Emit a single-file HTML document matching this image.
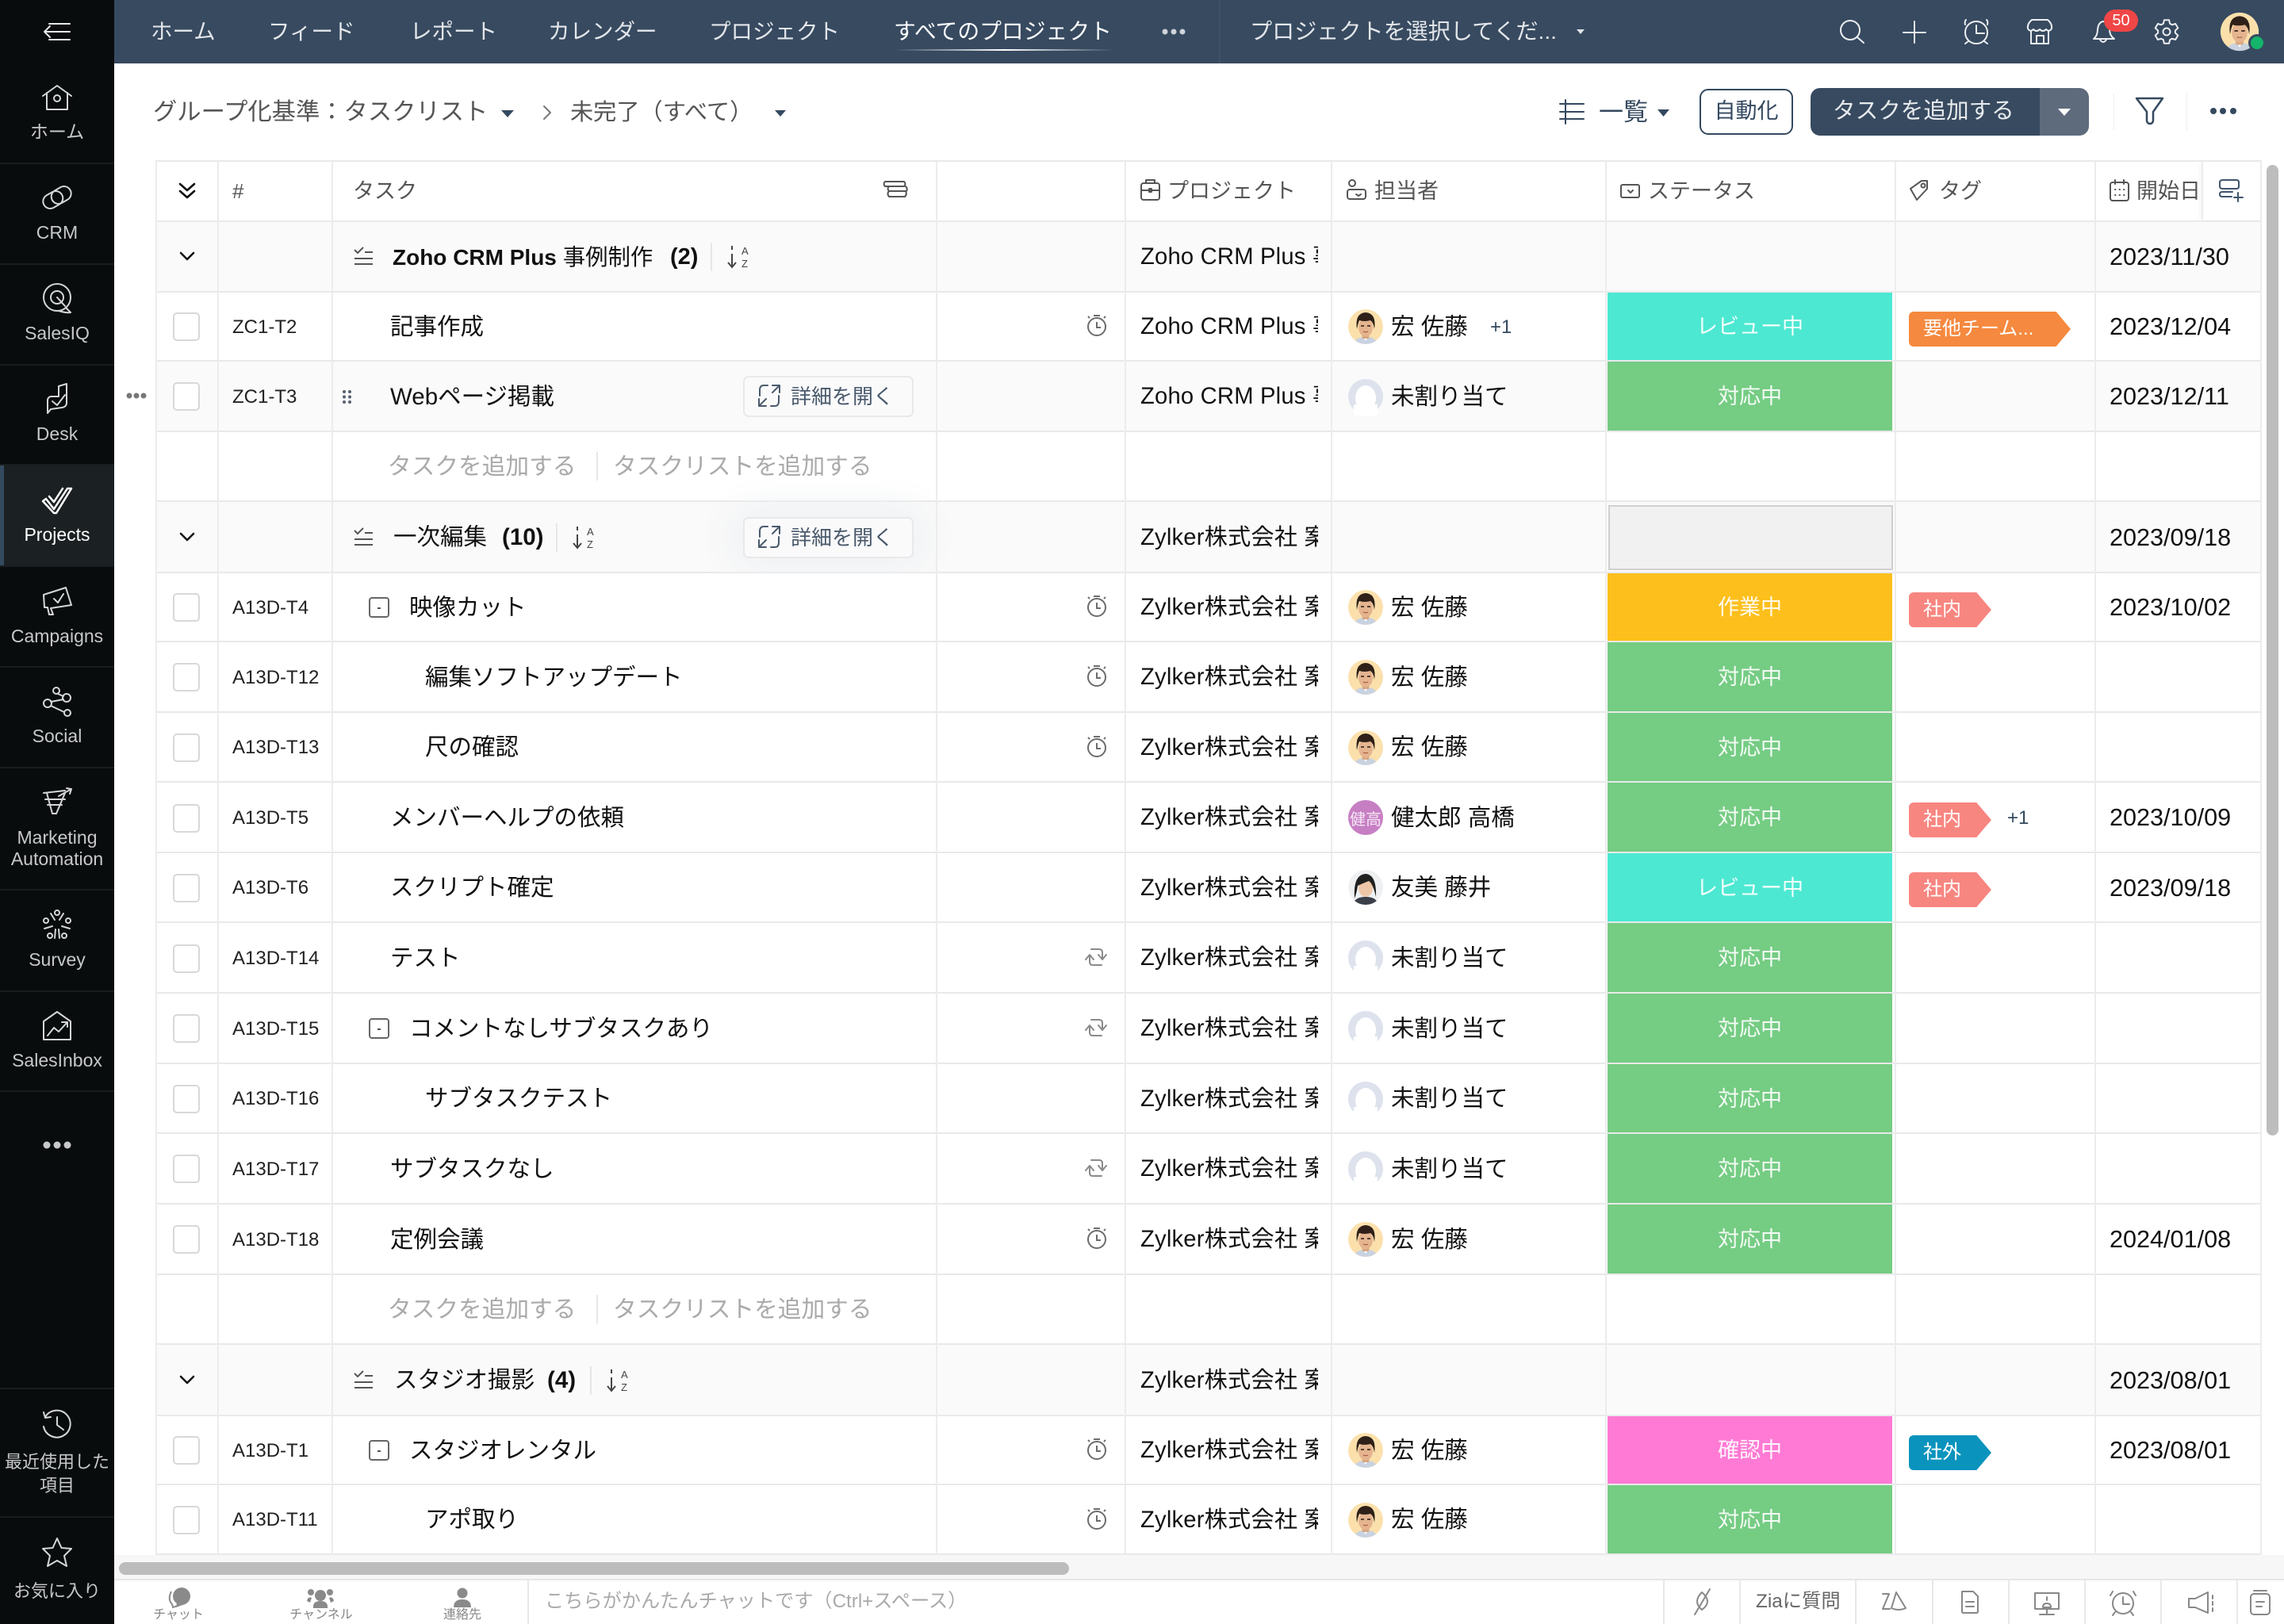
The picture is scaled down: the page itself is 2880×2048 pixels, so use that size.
<!DOCTYPE html>
<html lang="ja"><head><meta charset="utf-8"><title>Tasks</title>
<style>
html,body{margin:0;padding:0;background:#fff}
body{position:relative;width:2880px;height:2048px;overflow:hidden;font-family:"Liberation Sans","Noto Sans CJK JP",sans-serif;color:#111}
.abs,.n,.tb,.sl,.bb{position:absolute;white-space:nowrap}
#side{position:absolute;left:0;top:0;width:144px;height:2048px;background:#090c0d}
#top{position:absolute;left:144px;top:0;width:2736px;height:80px;background:#374a60}
.n{top:0;line-height:80px;font-size:27.5px;color:#e3e6ea}
.tb{line-height:60px;top:112px;color:#555}
.sl{left:0;width:144px;text-align:center;font-size:23px;color:#c6c8c9;line-height:28px}
.sd{position:absolute;left:0;width:144px;height:2px;background:#1a1d1f}
.r{position:absolute;left:196px;width:2655px;box-sizing:border-box;border-bottom:2px solid #e9e9ea;height:var(--h);line-height:var(--h);font-size:29.5px;background:#fff}
.r>span{position:absolute;top:0;white-space:nowrap}
.gr{background:#fafafa}
.h{font-size:27px;color:#555}
.i{left:97px;font-size:24px;color:#222}
.t1{left:296px}.t2{left:320px}.t3{left:340px}
.g1{left:300px}
.p{left:1242px;width:224px;overflow:hidden;font-size:29.2px;letter-spacing:.2px}
.a{left:1558px}
.s{left:1831px;width:359px;height:calc(var(--h) - 2px);text-align:center;font-size:27px;color:rgba(255,255,255,.92)}
.k{background:#75cc83}.c{background:#4de8d2}.y{background:#fdbf1c}.m{background:#ff7ad4}
.d{left:2464px;font-size:30.6px}
.ad{font-size:29.7px;color:#aaa}
.tag{top:24px!important;left:2211px;height:44px;line-height:44px;width:104px;padding-left:18px;box-sizing:border-box;font-size:24px;color:#fff;border-radius:6px;clip-path:polygon(0 0,82% 0,100% 50%,82% 100%,0 100%)}
.pk{background:#f88680}.bl{background:#0a93bd}
.or{background:#f5893f;width:204px;clip-path:polygon(0 0,91% 0,100% 50%,91% 100%,0 100%)}
.pl{font-size:24px;color:#34495f}
.btn{left:741px;width:215px;height:52px;line-height:48px;box-sizing:border-box;border:2px solid #e9e9ec;border-radius:7px;background:#fafafb;font-size:26px;color:#4a5a6c;padding-left:58px}
.sp{width:2px;height:36px;background:#e6e6e6}
.v{position:absolute;top:203px;width:2px;height:1757px;background:#ececed}
.bb{top:2027px;font-size:16px;color:#888;line-height:20px;text-align:center;width:120px}
.bs{position:absolute;top:1991px;width:2px;height:57px;background:#e8e8e8}
</style></head><body>

<div id="side"></div>
<div class="abs" style="left:0;top:586px;width:144px;height:127px;background:#1b2022"></div>
<div class="abs" style="left:0;top:586px;width:5px;height:127px;background:#34495f"></div>
<div class="sd" style="top:205px"></div><div class="sd" style="top:332px"></div><div class="sd" style="top:459px"></div><div class="sd" style="top:585px"></div><div class="sd" style="top:713px"></div><div class="sd" style="top:840px"></div><div class="sd" style="top:967px"></div><div class="sd" style="top:1121px"></div><div class="sd" style="top:1249px"></div><div class="sd" style="top:1375px"></div><div class="sd" style="top:1750px"></div><div class="sd" style="top:1912px"></div>
<div class="sl" style="top:152px">ホーム</div>
<div class="sl" style="top:279px">CRM</div>
<div class="sl" style="top:406px">SalesIQ</div>
<div class="sl" style="top:533px">Desk</div>
<div class="sl" style="top:660px;color:#fff">Projects</div>
<div class="sl" style="top:788px">Campaigns</div>
<div class="sl" style="top:914px">Social</div>
<div class="sl" style="top:1042px">Marketing</div>
<div class="sl" style="top:1069px">Automation</div>
<div class="sl" style="top:1196px">Survey</div>
<div class="sl" style="top:1323px">SalesInbox</div>
<div class="sl" style="top:1830px;font-size:22px">最近使用した</div>
<div class="sl" style="top:1860px;font-size:22px">項目</div>
<div class="sl" style="top:1993px;font-size:22px">お気に入り</div>

<div id="top"></div>
<span class="n" style="left:190px">ホーム</span>
<span class="n" style="left:338px">フィード</span>
<span class="n" style="left:517px">レポート</span>
<span class="n" style="left:691px">カレンダー</span>
<span class="n" style="left:894px">プロジェクト</span>
<span class="n" style="left:1127px;color:#fff;font-size:27.8px">すべてのプロジェクト</span>
<span class="n" style="left:1576px;font-size:28.1px">プロジェクトを選択してくだ...</span>
<div class="abs" style="left:1128px;top:62px;width:277px;height:2px;background:linear-gradient(90deg,rgba(255,255,255,0),#fff 50%,rgba(255,255,255,0))"></div>
<div class="abs" style="left:1537px;top:0;width:2px;height:80px;background:#3f5268"></div>
<div class="abs" style="left:2653px;top:12px;width:43px;height:28px;border-radius:14px;background:#ef4646;color:#fff;font-size:20px;line-height:28px;text-align:center;z-index:6">50</div>

<span class="tb" style="left:193px;font-size:30.3px">グループ化基準：タスクリスト</span>
<span class="tb" style="left:719px;font-size:29.2px">未完了（すべて）</span>
<span class="tb" style="left:2016px;font-size:31px;color:#34495f">一覧</span>
<div class="abs" style="left:2143px;top:112px;width:118px;height:58px;box-sizing:border-box;border:2px solid #34495f;border-radius:11px;line-height:52px;text-align:center;font-size:27px;color:#34495f">自動化</div>
<div class="abs" style="left:2283px;top:111px;width:289px;height:60px;background:#374a60;border-radius:12px 0 0 12px;line-height:58px;font-size:28.6px;color:#e8ebee;padding-left:28px;box-sizing:border-box">タスクを追加する</div>
<div class="abs" style="left:2572px;top:111px;width:62px;height:60px;background:#5d6b7d;border-radius:0 12px 12px 0"></div>
<div class="abs" style="left:2665px;top:118px;width:1px;height:46px;background:#eee"></div>
<div class="abs" style="left:2757px;top:118px;width:1px;height:46px;background:#eee"></div>

<!-- table -->
<div class="r h" style="top:203px;--h:77px;border-radius:10px 10px 0 0">
<span style="left:97px;font-size:26px">#</span><span style="left:249px">タスク</span>
<span style="left:1276px">プロジェクト</span><span style="left:1537px">担当者</span><span style="left:1882px">ステータス</span><span style="left:2249px">タグ</span><span style="left:2498px">開始日</span>
<span style="left:2580px;width:75px;height:74px;background:#fff;border-left:2px solid #ececed;box-shadow:-3px 0 4px rgba(0,0,0,.03)"></span>
</div>
<div class="abs" style="left:196px;top:202px;width:2656px;height:2px;background:#e9e9ea;z-index:3"></div>

<div class="r gr" style="top:280px;--h:89px"><span class="g1" style="left:299px;font-size:28.4px"><b style="font-size:28px">Zoho CRM Plus</b> 事例制作</span><span style="left:649px;font-size:29px"><b>(2)</b></span><span class="sp" style="left:700px;top:26px"></span><span class="p">Zoho CRM Plus 事例制作</span><span class="d">2023/11/30</span></div>

<div class="r" style="top:369px;--h:87px"><span class="i">ZC1-T2</span><span class="t1">記事作成</span><span class="p">Zoho CRM Plus 事例制作</span><span class="a">宏 佐藤</span><span class="pl" style="left:1683px">+1</span><span class="s c">レビュー中</span><span class="tag or">要他チーム...</span><span class="d">2023/12/04</span></div>

<div class="r gr" style="top:456px;--h:89px"><span class="i">ZC1-T3</span><span class="t1">Webページ掲載</span><span class="btn" style="top:18px">詳細を開く</span><span class="p">Zoho CRM Plus 事例制作</span><span class="a">未割り当て</span><span class="s k">対応中</span><span class="d">2023/12/11</span></div>

<div class="r" style="top:545px;--h:88px"><span class="ad" style="left:293px">タスクを追加する</span><span class="sp" style="left:556px;top:25px"></span><span class="ad" style="left:577px">タスクリストを追加する</span></div>

<div class="r gr" style="top:633px;--h:90px"><span class="g1">一次編集</span><span style="left:437px"><b>(10)</b></span><span class="sp" style="left:505px;top:27px"></span><span class="btn" style="top:19px;box-shadow:0 0 50px 12px #eef0f3">詳細を開く</span><span class="p">Zylker株式会社 案件制作</span><span style="left:1832px;top:4px;width:359px;height:82px;box-sizing:border-box;background:#f1f1f1;border:2px solid #d0d0d0"></span><span class="d">2023/09/18</span></div>

<div class="r" style="top:723px;--h:87px"><span class="i">A13D-T4</span><span class="t2">映像カット</span><span class="p">Zylker株式会社 案件制作</span><span class="a">宏 佐藤</span><span class="s y">作業中</span><span class="tag pk">社内</span><span class="d">2023/10/02</span></div>

<div class="r" style="top:810px;--h:89px"><span class="i">A13D-T12</span><span class="t3">編集ソフトアップデート</span><span class="p">Zylker株式会社 案件制作</span><span class="a">宏 佐藤</span><span class="s k">対応中</span></div>

<div class="r" style="top:899px;--h:88px"><span class="i">A13D-T13</span><span class="t3">尺の確認</span><span class="p">Zylker株式会社 案件制作</span><span class="a">宏 佐藤</span><span class="s k">対応中</span></div>

<div class="r" style="top:987px;--h:89px"><span class="i">A13D-T5</span><span class="t1">メンバーヘルプの依頼</span><span class="p">Zylker株式会社 案件制作</span><span class="a">健太郎 高橋</span><span class="s k">対応中</span><span class="tag pk" style="top:25px!important">社内</span><span class="pl" style="left:2335px">+1</span><span class="d">2023/10/09</span></div>

<div class="r" style="top:1076px;--h:88px"><span class="i">A13D-T6</span><span class="t1">スクリプト確定</span><span class="p">Zylker株式会社 案件制作</span><span class="a">友美 藤井</span><span class="s c">レビュー中</span><span class="tag pk">社内</span><span class="d">2023/09/18</span></div>

<div class="r" style="top:1164px;--h:89px"><span class="i">A13D-T14</span><span class="t1">テスト</span><span class="p">Zylker株式会社 案件制作</span><span class="a">未割り当て</span><span class="s k">対応中</span></div>

<div class="r" style="top:1253px;--h:89px"><span class="i">A13D-T15</span><span class="t2">コメントなしサブタスクあり</span><span class="p">Zylker株式会社 案件制作</span><span class="a">未割り当て</span><span class="s k">対応中</span></div>

<div class="r" style="top:1342px;--h:88px"><span class="i">A13D-T16</span><span class="t3">サブタスクテスト</span><span class="p">Zylker株式会社 案件制作</span><span class="a">未割り当て</span><span class="s k">対応中</span></div>

<div class="r" style="top:1430px;--h:89px"><span class="i">A13D-T17</span><span class="t1">サブタスクなし</span><span class="p">Zylker株式会社 案件制作</span><span class="a">未割り当て</span><span class="s k">対応中</span></div>

<div class="r" style="top:1519px;--h:89px"><span class="i">A13D-T18</span><span class="t1">定例会議</span><span class="p">Zylker株式会社 案件制作</span><span class="a">宏 佐藤</span><span class="s k">対応中</span><span class="d">2024/01/08</span></div>

<div class="r" style="top:1608px;--h:88px"><span class="ad" style="left:293px">タスクを追加する</span><span class="sp" style="left:556px;top:25px"></span><span class="ad" style="left:577px">タスクリストを追加する</span></div>

<div class="r gr" style="top:1696px;--h:90px"><span class="g1" style="left:301px">スタジオ撮影</span><span style="left:494px"><b>(4)</b></span><span class="sp" style="left:548px;top:27px"></span><span class="p">Zylker株式会社 案件制作</span><span class="d">2023/08/01</span></div>

<div class="r" style="top:1786px;--h:87px"><span class="i">A13D-T1</span><span class="t2">スタジオレンタル</span><span class="p">Zylker株式会社 案件制作</span><span class="a">宏 佐藤</span><span class="s m">確認中</span><span class="tag bl">社外</span><span class="d">2023/08/01</span></div>

<div class="r" style="top:1873px;--h:88px"><span class="i">A13D-T11</span><span class="t3">アポ取り</span><span class="p">Zylker株式会社 案件制作</span><span class="a">宏 佐藤</span><span class="s k">対応中</span></div>

<div class="v" style="left:196px"></div><div class="v" style="left:274px"></div><div class="v" style="left:418px"></div><div class="v" style="left:1180px"></div><div class="v" style="left:1418px"></div><div class="v" style="left:1678px"></div><div class="v" style="left:2024px"></div><div class="v" style="left:2389px"></div><div class="v" style="left:2641px"></div><div class="v" style="left:2850px"></div>

<!-- bottom -->
<div class="abs" style="left:144px;top:1961px;width:2736px;height:30px;background:#f7f7f7;border-bottom:2px solid #e6e6e6;box-sizing:content-box"></div>
<div class="abs" style="left:150px;top:1970px;width:1198px;height:16px;border-radius:8px;background:#bcbcbc"></div>
<div class="abs" style="left:2858px;top:208px;width:15px;height:1224px;border-radius:8px;background:#bdbdbd"></div>
<div class="abs" style="left:144px;top:1993px;width:2736px;height:55px;background:#fff"></div>
<div class="bb" style="left:165px">チャット</div><div class="bb" style="left:345px">チャンネル</div><div class="bb" style="left:523px">連絡先</div>
<div class="abs" style="left:687px;top:1998px;font-size:24.2px;line-height:44px;color:#aaa">こちらがかんたんチャットです（Ctrl+スペース）</div>
<div class="abs" style="left:2214px;top:1998px;font-size:24.3px;line-height:44px;color:#666">Ziaに質問</div>
<div class="bs" style="left:665px"></div><div class="bs" style="left:2097px"></div><div class="bs" style="left:2193px"></div><div class="bs" style="left:2339px"></div><div class="bs" style="left:2436px"></div><div class="bs" style="left:2532px"></div><div class="bs" style="left:2628px"></div><div class="bs" style="left:2724px"></div><div class="bs" style="left:2820px"></div>

<!-- icons overlay -->
<svg class="abs" style="left:0;top:0;z-index:5;pointer-events:none" width="2880" height="2048" viewBox="0 0 2880 2048" fill="none">
<defs>
<clipPath id="ac"><circle r="22"/></clipPath>
<g id="cb"><rect x="-16" y="-17" width="32" height="34" rx="4" fill="#fff" stroke="#d8d8d8" stroke-width="2"/></g>
<g id="tm" stroke="#6c6c6c" stroke-width="2"><circle r="11" cy="1"/><path d="M0 -5V2H5M-4 -13H4M-9 -10L-11 -12M9 -10L11 -12"/></g>
<g id="rp" stroke="#8a8a8a" stroke-width="2" stroke-linecap="round" stroke-linejoin="round"><path d="M-8 -2V6Q-8 10 -4 10H7M-13 3L-8 -3L-3 3M8 2V-6Q8 -10 4 -10H-6M13 -3L8 3L3 -3"/></g>
<g id="tg"><rect x="-12" y="-12" width="24" height="24" rx="3" stroke="#666" stroke-width="2"/><path d="M-2 1H2" stroke="#555" stroke-width="2"/></g>
<g id="gi" stroke="#555" stroke-width="2"><path d="M-11 -8L-7 -4L0 -11M2 -5H12M-11 3H12M-11 10H12"/></g>
<g id="ch" stroke="#111" stroke-width="2.6" stroke-linecap="round" stroke-linejoin="round"><path d="M-8 -4L0 4L8 -4"/></g>
<g id="so" stroke="#444" stroke-width="2"><path d="M-9 -13V-8M-9 -3V13M-14 8L-9 14L-4 8"/><text x="3" y="-2" fill="#444" stroke="none" font-size="13" font-family="Liberation Sans">A</text><text x="3" y="14" fill="#444" stroke="none" font-size="13" font-family="Liberation Sans">Z</text></g>
<g id="av"><g clip-path="url(#ac)"><circle r="22" fill="#fbe0ac"/><path d="M-15 22Q-13 14 -4 13H4Q13 14 15 22Z" fill="#c9d2e0"/><path d="M-3 13L0 18L3 13Z" fill="#fff"/><path d="M-5 7H5L4 15H-4Z" fill="#d8a680"/><ellipse cy="1" rx="9" ry="11.500" fill="#e4b48f"/><path d="M-11 3Q-14 -17 0 -18Q14 -17 11 3Q10 -5 6 -8Q-2 -6 -8 -8Q-10 -3 -11 3Z" fill="#2e2018"/><path d="M-6 -1H-2M2 -1H6" stroke="#2a1b14" stroke-width="1.500"/><path d="M-3 6Q0 7.500 3 6" stroke="#a8553f" stroke-width="1"/></g></g>
<g id="un"><circle r="22" fill="#dde2ed"/><ellipse cy="2" rx="13" ry="16" fill="#fff"/><path d="M-15 10H15V24H-15Z" fill="#fff"/></g>
</defs>

<!-- side icons -->
<g stroke="#d4d6d7" stroke-width="2" stroke-linecap="round" stroke-linejoin="round">
<path d="M62 30H88M56 40H88M62 50H88M63 33L56 40L63 47" stroke="#e8e8e8"/>
<g transform="translate(72 123)"><path d="M-18 -2L0 -15L18 -2M-13 -6V15H13V-6"/><circle cy="1" r="4"/></g>
<g transform="translate(72 249) rotate(-30)"><rect x="-19" y="-9" width="26" height="18" rx="9"/><rect x="-7" y="-9" width="26" height="18" rx="9"/></g>
<g transform="translate(72 377)"><circle r="17" cy="-2"/><circle r="8" cy="-2"/><path d="M0 -2L10 9M2 15Q12 18 17 17L11 11"/></g>
<g transform="translate(72 504)"><path d="M2 -17L12 -20V4Q12 9 6 10L-8 12L-12 17V1Q-12 -3 -8 -4H2Z"/><path d="M-6 2L0 7L10 -6"/></g>
<g transform="translate(72 632)" stroke="#fff" stroke-width="2.5"><path d="M-18 0L-4 15L-1 15L18 -16L13 -16L-4 10L-14 -3ZM-10 -6L-4 1L7 -16"/></g>
<g transform="translate(72 758)"><path d="M-17 -8L11 -17L18 5L-8 9L-5 17L-10 17L-12 8L-16 8Z"/><path d="M-4 -3L1 2L8 -9"/></g>
<g transform="translate(72 885)"><circle cx="-1" cy="-14" r="4"/><circle cx="12" cy="-5" r="5"/><circle cx="-12" cy="2" r="5"/><circle cx="13" cy="14" r="4"/><path d="M1 -10L8 -7M8 -3L-8 0M-8 5L9 13"/></g>
<g transform="translate(72 1012)"><path d="M-17 -12L10 -15M-15 -4H10M-12 3H6M-13 -12L-6 14H-1L10 -12M12 -18L18 -17L16 -11M2 -8L18 -17"/></g>
<g transform="translate(72 1166)"><circle cx="0" cy="-15" r="3"/><circle cx="-14" cy="-5" r="3"/><circle cx="14" cy="-5" r="3"/><circle cx="-9" cy="14" r="3"/><circle cx="9" cy="14" r="3"/><path d="M-8 -14L-3 -6M8 -14L3 -6M-16 5L-6 2M16 5L6 2M-2 6L-3 17M2 6L3 17" /></g>
<g transform="translate(72 1294)"><path d="M-17 -6L0 -18L17 -6V17H-17Z"/><path d="M-12 12L-4 2L2 7L12 -4M6 -5H13V1"/></g>
<g fill="#c9c9c9" stroke="none"><circle cx="59" cy="1444" r="4.500"/><circle cx="72" cy="1444" r="4.500"/><circle cx="85" cy="1444" r="4.500"/></g>
<g transform="translate(72 1796)"><path d="M-15 -9A17 17 0 1 1 -17 3M-17 -15L-15 -8L-8 -9M0 -9V1L8 7"/></g>
<g transform="translate(72 1958)"><path d="M0 -18L5.500 -6L18 -5L9 4L12 17L0 10L-12 17L-9 4L-18 -5L-5.500 -6Z"/></g>
</g>

<!-- nav dots & icons -->
<g fill="#cfd4da"><circle cx="1469" cy="40" r="3.500"/><circle cx="1480" cy="40" r="3.500"/><circle cx="1491" cy="40" r="3.500"/></g>
<path d="M1988 37H1998L1993 43Z" fill="#dfe3e7"/>
<g stroke="#eceef1" stroke-width="2" stroke-linecap="round" stroke-linejoin="round">
<circle cx="2333" cy="38" r="12"/><path d="M2342 47L2350 54"/>
<path d="M2400 41H2428M2414 27V54"/>
<circle cx="2492" cy="41" r="14"/><path d="M2492 32V42H2502M2479 25Q2477 27 2478 31M2505 25Q2507 27 2506 31M2482 52L2478 55M2502 52L2506 55"/>
<path d="M2562 25H2582Q2588 30 2587 36Q2584 41 2580 37Q2576 41 2572 37Q2568 41 2564 37Q2560 41 2557 36Q2556 30 2562 25ZM2561 40V55H2583V40M2568 55V45H2577V55"/>
<path d="M2640 49Q2645 45 2645 37Q2646 28 2652 27Q2659 28 2660 37Q2660 45 2666 49ZM2648 50Q2652 56 2656 50"/>
<path transform="translate(2732 40)" d="M-3.100 -14.700L3.100 -14.700L4.100 -10.200L6.800 -8.700L11.100 -10L14.300 -4.600L10.900 -1.500L10.900 1.500L14.300 4.600L11.100 10L6.800 8.700L4.100 10.200L3.100 14.700L-3.100 14.700L-4.100 10.200L-6.800 8.700L-11.100 10L-14.300 4.600L-10.900 1.500L-10.900 -1.500L-14.300 -4.600L-11.100 -10L-6.800 -8.700L-4.100 -10.200Z"/>
<circle cx="2732" cy="40" r="4.500"/>
</g>
<g transform="translate(2824 40) scale(1.1)"><use href="#av"/></g>
<circle cx="2846" cy="54" r="11" fill="#374a60"/><circle cx="2846" cy="54" r="8" fill="#14b56b"/>

<!-- toolbar icons -->
<g fill="#34495f"><path d="M632 139H648L640 148Z"/><path d="M977 139H991L984 147Z"/><path d="M2090 138H2105L2097.500 147Z"/><path d="M2595 137H2611L2603 146Z" fill="#fff"/></g>
<path d="M686 134L694 142L686 150" stroke="#777" stroke-width="2" stroke-linecap="round" stroke-linejoin="round"/>
<g stroke="#34495f" stroke-width="2.500" stroke-linecap="round" stroke-linejoin="round">
<path d="M1967 131H1997M1967 141H1997M1967 150H1997M1974 126V156" stroke-width="2"/>
<path d="M2694 124H2727L2715 141V152A4 4 0 0 1 2707 152V141Z"/>
</g>
<g fill="#34495f"><circle cx="2791" cy="140" r="4"/><circle cx="2803" cy="140" r="4"/><circle cx="2816" cy="140" r="4"/></g>

<!-- table head icons -->
<path d="M227 232L236 240L245 232M227 241L236 249L245 241" stroke="#111" stroke-width="2.600" stroke-linecap="round" stroke-linejoin="round"/>
<g stroke="#555" stroke-width="2" stroke-linecap="round" stroke-linejoin="round">
<path d="M1116 229H1140Q1143 232 1140 235H1116Q1113 232 1116 229ZM1121 235Q1118 238 1121 241H1143Q1145 238 1142 235M1121 241Q1118 244 1121 248H1141Q1144 245 1142 241" />
<rect x="1439" y="231" width="23" height="21" rx="3"/><path d="M1445 231V227H1456V231M1439 240H1462M1449 238H1452V242H1449Z"/>
<circle cx="1705" cy="231" r="4"/><rect x="1699" y="239" width="23" height="12" rx="3"/><path d="M1710 245L1713 247L1716 245"/>
<rect x="2044" y="233" width="23" height="16" rx="2"/><path d="M2053 240L2056 243L2059 240"/>
<path d="M2409 238L2423 228H2430V238L2417 252ZM2409 238L2417 252"/><circle cx="2425" cy="234" r="2.500"/>
<rect x="2661" y="230" width="23" height="23" rx="3"/><path d="M2667 227V232M2678 227V232M2667 239H2667.500M2672.500 239H2673M2678 239H2678.500M2667 246H2667.500M2672.500 246H2673M2678 246H2678.500"/>
<path d="M2803 227H2820Q2823 227 2823 230V235Q2823 238 2820 238H2803Q2799 238 2799 235V230Q2799 227 2803 227ZM2815 242H2802Q2799 242 2799 245Q2799 248 2802 248H2814M2822 243V254M2817 249H2828" stroke="#3f556c"/>
</g>

<!-- dots and grip -->
<g fill="#777"><circle cx="163" cy="499" r="3.500"/><circle cx="172" cy="499" r="3.500"/><circle cx="181" cy="499" r="3.500"/></g>
<g fill="#55606e"><circle cx="434" cy="494" r="2"/><circle cx="441" cy="494" r="2"/><circle cx="434" cy="500.500" r="2"/><circle cx="441" cy="500.500" r="2"/><circle cx="434" cy="507" r="2"/><circle cx="441" cy="507" r="2"/></g>

<!-- group chevrons & icons -->
<use href="#ch" x="236" y="323"/><use href="#ch" x="236" y="677"/><use href="#ch" x="236" y="1740"/>
<use href="#gi" x="458" y="323"/><use href="#gi" x="458" y="677"/><use href="#gi" x="458" y="1740"/>
<use href="#so" x="932" y="323"/><use href="#so" x="737" y="677"/><use href="#so" x="780" y="1740"/>

<!-- checkboxes -->
<use href="#cb" x="235" y="412"/><use href="#cb" x="235" y="500"/><use href="#cb" x="235" y="766"/><use href="#cb" x="235" y="854"/><use href="#cb" x="235" y="943"/><use href="#cb" x="235" y="1032"/><use href="#cb" x="235" y="1120"/><use href="#cb" x="235" y="1209"/><use href="#cb" x="235" y="1297"/><use href="#cb" x="235" y="1386"/><use href="#cb" x="235" y="1474"/><use href="#cb" x="235" y="1563"/><use href="#cb" x="235" y="1829"/><use href="#cb" x="235" y="1917"/>

<!-- toggles, timers, repeats -->
<use href="#tg" x="478" y="766"/><use href="#tg" x="478" y="1297"/><use href="#tg" x="478" y="1829"/>
<use href="#tm" x="1383" y="411"/><use href="#tm" x="1383" y="765"/><use href="#tm" x="1383" y="853"/><use href="#tm" x="1383" y="942"/><use href="#tm" x="1383" y="1562"/><use href="#tm" x="1383" y="1828"/><use href="#tm" x="1383" y="1916"/>
<use href="#rp" x="1382" y="1207"/><use href="#rp" x="1382" y="1296"/><use href="#rp" x="1382" y="1473"/>

<!-- avatars -->
<use href="#av" x="1722" y="412"/><use href="#un" x="1722" y="500"/><use href="#av" x="1722" y="766"/><use href="#av" x="1722" y="854"/><use href="#av" x="1722" y="943"/>
<circle cx="1722" cy="1031" r="22" fill="#c77fc4"/><text x="1722" y="1040" text-anchor="middle" font-size="20" fill="#f4e4f3" font-family="Noto Sans CJK JP">健高</text>
<g transform="translate(1722 1119)"><g clip-path="url(#ac)"><circle r="22" fill="#eef0f2"/><path d="M-16 22Q-14 12 0 12Q14 12 16 22Z" fill="#3a3f4a"/><ellipse cy="1" rx="9" ry="11" fill="#eec7a8"/><path d="M-14 14Q-16 -16 0 -17Q14 -16 13 12Q9 -5 4 -8Q-6 -4 -10 -2Q-11 6 -14 14Z" fill="#20211f"/></g></g>
<use href="#un" x="1722" y="1208"/><use href="#un" x="1722" y="1297"/><use href="#un" x="1722" y="1386"/><use href="#un" x="1722" y="1474"/><use href="#av" x="1722" y="1563"/><use href="#av" x="1722" y="1829"/><use href="#av" x="1722" y="1917"/>

<!-- detail button icons -->
<g stroke="#4a5a6c" stroke-width="2" stroke-linecap="round" stroke-linejoin="round">
<g transform="translate(970 499)"><path d="M-2 -13H-7Q-12 -13 -12 -7V0M2 13H7Q12 13 12 7V0M4 -13H13V-4M13 -13L4 -4M-13 4V13H-4M-13 13L-4 4"/></g>
<g transform="translate(970 677)"><path d="M-2 -13H-7Q-12 -13 -12 -7V0M2 13H7Q12 13 12 7V0M4 -13H13V-4M13 -13L4 -4M-13 4V13H-4M-13 13L-4 4"/></g>
</g>

<!-- bottom icons -->
<g fill="#8a8a8a">
<circle cx="229" cy="2013" r="11"/><path d="M223 2021L222 2027L233 2023Z"/>
<path d="M216 2007Q211 2017 217 2023L218 2027L224 2025" stroke="#8a8a8a" stroke-width="2" fill="none"/>
<circle cx="404" cy="2012" r="7"/><circle cx="392" cy="2008" r="4"/><circle cx="416" cy="2008" r="4"/><path d="M395 2028Q394 2019 404 2019Q414 2019 413 2028Z"/><path d="M387 2019Q388 2013 393 2015L391 2021ZM421 2019Q420 2013 415 2015L417 2021Z"/>
<circle cx="583" cy="2009" r="6.500"/><path d="M572 2027Q572 2017 583 2017Q594 2017 594 2027Z"/>
</g>
<g stroke="#888" stroke-width="2" stroke-linecap="round" stroke-linejoin="round">
<path d="M2146 2008Q2160 2020 2146 2030Q2134 2020 2146 2008ZM2137 2036L2156 2004"/>
<path d="M2374 2010H2382L2374 2029H2383M2391 2008L2403 2028Q2394 2032 2385 2028Z"/>
<path d="M2474 2007H2488L2494 2013V2032Q2494 2034 2492 2034H2476Q2474 2034 2474 2032ZM2479 2020H2489M2479 2026H2489"/>
<path d="M2566 2009H2596V2029H2566ZM2572 2036H2590M2581 2029V2036"/><path d="M2576 2027Q2576 2022 2581 2022Q2586 2022 2586 2027ZM2581 2014V2018" />
<circle cx="2677" cy="2022" r="13"/><path d="M2677 2014V2023H2685M2664 2007L2661 2012M2690 2007L2693 2012M2667 2033L2664 2037M2687 2033L2690 2037"/>
<path d="M2760 2016H2768L2784 2008V2034L2768 2027H2760ZM2790 2012V2016M2790 2020V2024M2790 2028V2032"/>
<rect x="2838" y="2010" width="24" height="26" rx="4"/><path d="M2842 2006H2858M2845 2020H2855M2845 2026H2852"/>
</g>
</svg>
</body></html>
